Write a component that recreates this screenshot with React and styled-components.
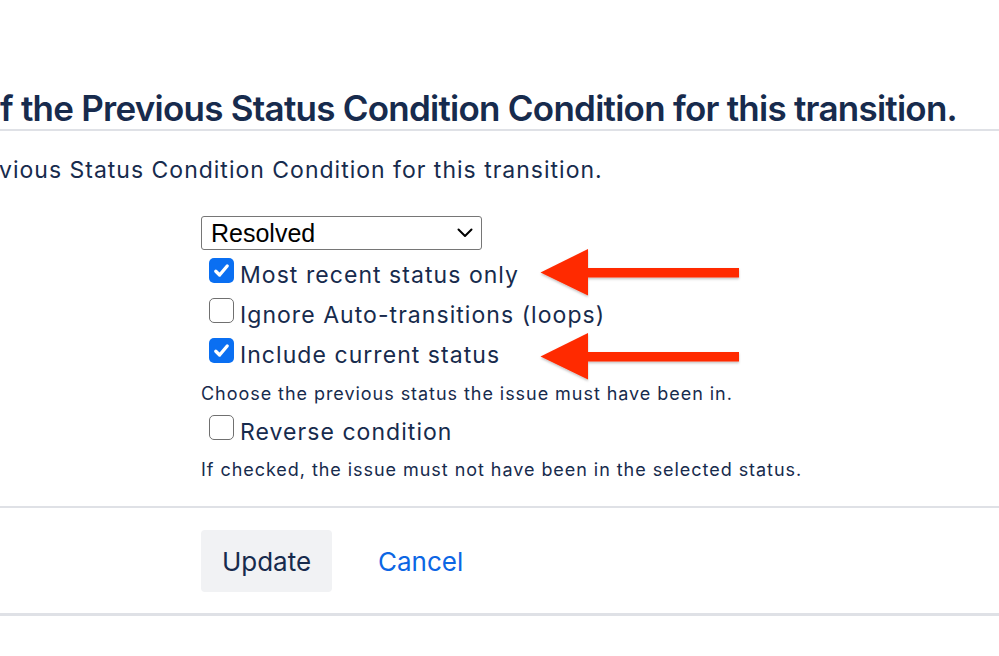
import React, { useState } from "react";
import styled, { createGlobalStyle } from "styled-components";

const GlobalStyle = createGlobalStyle`
  html, body {
    margin: 0;
    padding: 0;
    background: #ffffff;
  }
  body {
    font-family: Inter, "Noto Sans", sans-serif;
    color: #172b4d;
  }
`;

const Page = styled.div`
  position: relative;
  width: 999px;
  height: 656px;
  overflow: hidden;
  background: #ffffff;
`;

const Header = styled.div`
  padding-top: 88px;
  padding-bottom: 1px;
  border-bottom: 2px solid #dfe1e6;
`;

const Title = styled.h2`
  margin: 0;
  font-size: 35px;
  line-height: 40px;
  font-weight: 600;
  letter-spacing: -0.75px;
  white-space: nowrap;
  color: #172b4d;
`;

const Description = styled.p`
  margin: 24px 0 0 -1px;
  font-size: 23px;
  line-height: 30px;
  letter-spacing: 1px;
  white-space: nowrap;
  color: #172b4d;
`;

const Form = styled.div`
  padding-left: 201px;
  margin-top: 31px;
`;

const SelectBox = styled.div`
  width: 281px;
  height: 34px;
  box-sizing: border-box;
  border: 1px solid #767676;
  border-radius: 3px;
  display: flex;
  align-items: center;
  justify-content: space-between;
  padding: 0 8px 0 9px;
  font-family: "Liberation Sans", Arial, sans-serif;
  font-size: 25px;
  color: #000000;
`;

const Rows = styled.div`
  margin-top: ${(p) => p.$top}px;
  padding-left: 8px;
`;

const Row = styled.label`
  display: flex;
  height: 40px;
  align-items: center;
  gap: 6px;
  cursor: pointer;
`;

const Box = styled.span`
  align-self: flex-start;
  margin-top: 3px;
  width: 25px;
  height: 25px;
  box-sizing: border-box;
  border-radius: 5px;
  display: flex;
  align-items: center;
  justify-content: center;
  background: ${(p) => (p.$checked ? "#0a6ff2" : "#ffffff")};
  border: ${(p) => (p.$checked ? "none" : "1.5px solid #707070")};
`;

const Label = styled.span`
  font-size: 23px;
  line-height: 40px;
  letter-spacing: 1.05px;
  color: #172b4d;
  white-space: nowrap;
`;

const Help = styled.div`
  margin-top: ${(p) => p.$top}px;
  font-size: 18px;
  line-height: 24px;
  letter-spacing: 0.95px;
  color: #172b4d;
  white-space: nowrap;
`;

const Divider = styled.div`
  margin-top: 24px;
  height: 2px;
  background: #dfe1e6;
`;

const Actions = styled.div`
  display: flex;
  align-items: center;
  gap: 46px;
  padding-left: 201px;
  margin-top: 22px;
  height: 62px;
`;

const UpdateButton = styled.button`
  width: 131px;
  height: 62px;
  border: none;
  border-radius: 4px;
  background: #f1f2f4;
  font-family: Inter, "Noto Sans", sans-serif;
  font-size: 26px;
  color: #172b4d;
  cursor: pointer;
`;

const CancelLink = styled.a`
  font-size: 26px;
  color: #0c66e4;
  text-decoration: none;
  cursor: pointer;
`;

const BottomRule = styled.div`
  margin-top: 21px;
  height: 3px;
  background: #dfe1e6;
`;

const Arrow = styled.svg`
  position: absolute;
  left: 536px;
  top: ${(p) => p.$top}px;
  width: 208px;
  height: 52px;
  overflow: visible;
`;

const Check = () => (
  <svg width="19" height="19" viewBox="0 0 16 16">
    <path
      d="M3.2 8.6 L6.4 11.8 L12.8 4.2"
      fill="none"
      stroke="#ffffff"
      strokeWidth="2.8"
      strokeLinecap="round"
      strokeLinejoin="round"
    />
  </svg>
);

const Chevron = () => (
  <svg width="16" height="10" viewBox="0 0 16 10">
    <path
      d="M1.5 1.5 L8 8 L14.5 1.5"
      fill="none"
      stroke="#000000"
      strokeWidth="2"
      strokeLinecap="round"
      strokeLinejoin="round"
    />
  </svg>
);

const RedArrow = ({ top }) => (
  <Arrow $top={top} viewBox="0 0 208 52">
    <defs>
      <filter id={`sh${top}`} x="-10%" y="-20%" width="120%" height="150%">
        <feDropShadow dx="0" dy="1.5" stdDeviation="1" floodColor="#000" floodOpacity="0.25" />
      </filter>
    </defs>
    <g filter={`url(#sh${top})`}>
      <polygon points="4.5,25.5 52,2 52,48.5" fill="#ff2a00" />
      <rect x="50" y="21" width="153" height="9.5" fill="#ff2a00" />
    </g>
  </Arrow>
);

const CheckRow = ({ checked, label, onToggle }) => (
  <Row onClick={onToggle}>
    <Box $checked={checked}>{checked && <Check />}</Box>
    <Label>{label}</Label>
  </Row>
);

export default function App() {
  const [opts, setOpts] = useState({
    recent: true,
    ignore: false,
    include: true,
    reverse: false,
  });
  const toggle = (k) => () => setOpts({ ...opts, [k]: !opts[k] });

  return (
    <Page>
      <GlobalStyle />
      <Header>
        <Title>f the Previous Status Condition Condition for this transition.</Title>
      </Header>
      <Description>vious Status Condition Condition for this transition.</Description>

      <Form>
        <SelectBox>
          <span>Resolved</span>
          <Chevron />
        </SelectBox>
        <Rows $top={5}>
          <CheckRow checked={opts.recent} label="Most recent status only" onToggle={toggle("recent")} />
          <CheckRow checked={opts.ignore} label="Ignore Auto-transitions (loops)" onToggle={toggle("ignore")} />
          <CheckRow checked={opts.include} label="Include current status" onToggle={toggle("include")} />
        </Rows>
        <Help $top={7}>Choose the previous status the issue must have been in.</Help>
        <Rows $top={6}>
          <CheckRow checked={opts.reverse} label="Reverse condition" onToggle={toggle("reverse")} />
        </Rows>
        <Help $top={6}>If checked, the issue must not have been in the selected status.</Help>
      </Form>

      <Divider />
      <Actions>
        <UpdateButton>Update</UpdateButton>
        <CancelLink>Cancel</CancelLink>
      </Actions>
      <BottomRule />

      <RedArrow top={247} />
      <RedArrow top={331} />
    </Page>
  );
}
